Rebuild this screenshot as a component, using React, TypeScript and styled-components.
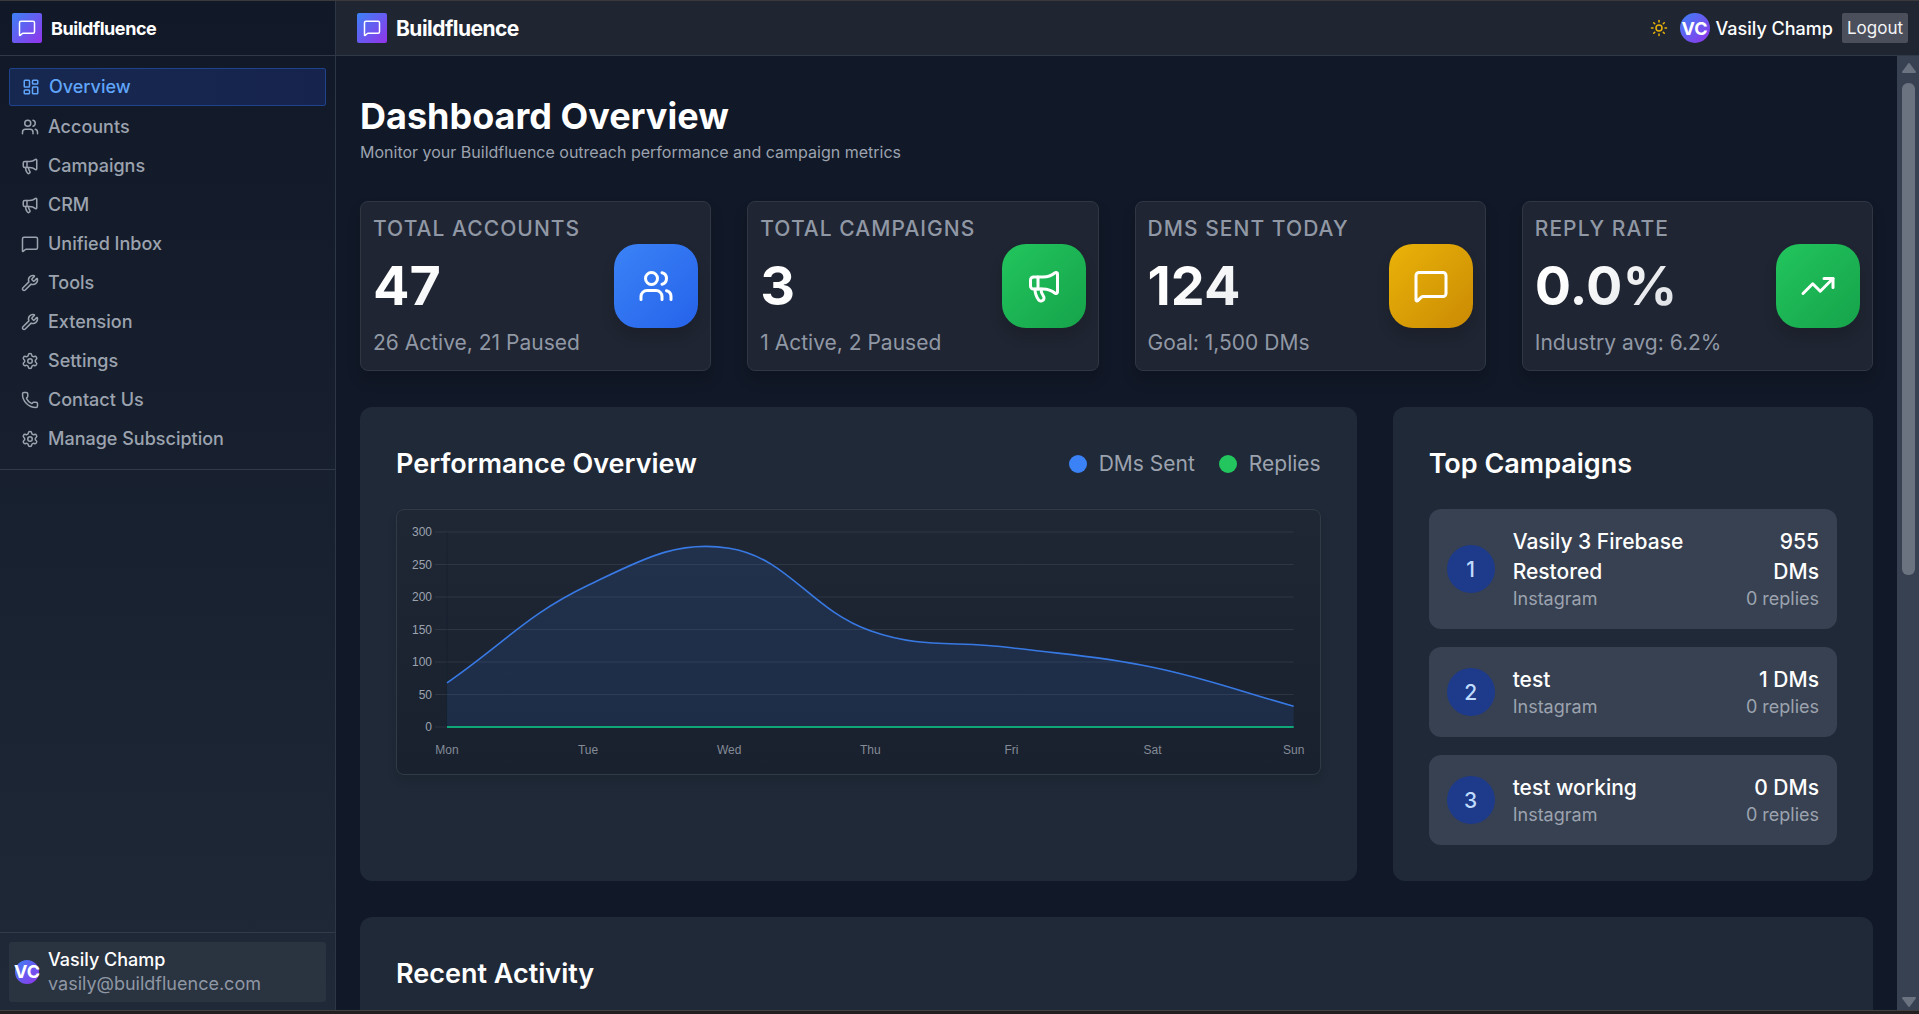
import React, { useLayoutEffect, useRef, useState } from "react";
import styled, { createGlobalStyle } from "styled-components";
import {
  LayoutDashboard,
  Users,
  Megaphone,
  MessageSquare,
  Wrench,
  Settings,
  Phone,
  Sun,
  TrendingUp,
  type LucideIcon,
} from "lucide-react";

const GlobalStyle = createGlobalStyle`
  *, *::before, *::after { box-sizing: border-box; }
  body { margin: 0; background: #111827; }
  h1, h2, p, ul, ol { margin: 0; padding: 0; }
  ul, ol { list-style: none; }
  button { font: inherit; border: 0; cursor: pointer; }
  a { color: inherit; text-decoration: none; }
`;

const Page = styled.div`
  display: flex;
  flex-direction: column;
  height: 100vh;
  overflow: hidden;
  border-top: 1px solid #3a3a3c;
  background: #111827;
  color: #fff;
  font-family: Inter, "Noto Sans", sans-serif;
  font-size: 18px;
  line-height: 27px;
`;

const Shell = styled.div`
  display: flex;
  flex: 1;
  min-height: 0;
`;

const WindowEdge = styled.div`
  height: 4px;
  flex: none;
  border-top: 1px solid #414141;
  background: #231f20;
`;

const Sidebar = styled.aside`
  display: flex;
  flex-direction: column;
  flex: none;
  width: 336px;
  border-right: 1px solid #2d3645;
  background: linear-gradient(180deg, #111827, #1f2937);
`;

const BrandBar = styled.div`
  display: flex;
  align-items: center;
  gap: 9px;
  height: 55px;
  flex: none;
  padding: 0 12px;
  border-bottom: 1px solid #303948;
`;

const LogoTile = styled.span`
  display: grid;
  place-items: center;
  width: 30px;
  height: 30px;
  border-radius: 2px;
  background: linear-gradient(135deg, #3b82f6, #9333ea);
`;

const BrandName = styled.span<{ $size: number }>`
  font-size: ${(p) => p.$size}px;
  font-weight: 700;
  letter-spacing: -0.025em;
`;

const NavList = styled.ul`
  display: flex;
  flex-direction: column;
  gap: 3px;
  padding: 12px 9px;
  border-bottom: 1px solid #303a49;
`;

const NavLink = styled.a<{ $active?: boolean }>`
  display: flex;
  align-items: center;
  gap: 9px;
  padding: 4px 12px 5px;
  border: ${(p) => (p.$active ? "1px solid #1e438c" : "0")};
  border-radius: 2px;
  background: ${(p) => (p.$active ? "linear-gradient(90deg, #172850, #16244d)" : "none")};
  color: ${(p) => (p.$active ? "#60a5fa" : "#9ca3af")};
  font-weight: 500;
`;

const Account = styled.div`
  margin-top: auto;
  padding: 9px 9px 8px;
  border-top: 1px solid #313b4a;
`;

const AccountCard = styled.div`
  display: flex;
  align-items: center;
  gap: 9px;
  padding: 6px;
  border-radius: 3px;
  background: #2a3340;
  line-height: 24px;
`;

const Avatar = styled.span<{ $size: number }>`
  display: flex;
  align-items: center;
  justify-content: center;
  flex: none;
  width: ${(p) => p.$size}px;
  height: ${(p) => p.$size}px;
  border-radius: 50%;
  background: linear-gradient(135deg, #3b82f6, #9333ea);
  font-weight: 700;
`;

const PersonName = styled.div`
  font-weight: 500;
`;

const Email = styled.div`
  color: #8f97a4;
`;

const Column = styled.div`
  display: flex;
  flex-direction: column;
  flex: 1;
  min-width: 0;
`;

const TopBar = styled.header`
  display: flex;
  align-items: center;
  justify-content: space-between;
  flex: none;
  height: 55px;
  padding: 0 11px 0 21px;
  border-bottom: 1px solid #303948;
  background: #1f2632;
`;

const BarGroup = styled.div<{ $gap: number }>`
  display: flex;
  align-items: center;
  gap: ${(p) => p.$gap}px;
`;

const ThemeButton = styled.button`
  display: grid;
  place-items: center;
  padding: 0;
  margin-right: 3px;
  background: none;
  color: #eab308;
`;

const LogoutButton = styled.button`
  height: 30px;
  padding: 0 5px;
  border-radius: 2px;
  background: #4b4f5b;
  color: #f3f4f6;
  font-size: 17px;
`;

const ScrollArea = styled.div`
  display: flex;
  flex: 1;
  min-height: 0;
`;

const Main = styled.main`
  flex: 1;
  min-width: 0;
  padding: 36px 24px;
  overflow-y: auto;
  scrollbar-width: none;
`;

const ScrollTrack = styled.div`
  display: flex;
  flex-direction: column;
  align-items: center;
  justify-content: space-between;
  flex: none;
  width: 22px;
  padding: 7px 0 3px 1px;
  background: #374151;
`;

const ScrollThumb = styled.div`
  width: 13px;
  flex: 0 1 492px;
  margin: 10px 0 auto;
  border-radius: 6px;
  background: #6b7280;
`;

const PageTitle = styled.h1`
  font-size: 36px;
  line-height: 48px;
  font-weight: 700;
`;

const PageLead = styled.p`
  margin-bottom: 36px;
  color: #9ca3af;
  font-size: 16px;
  line-height: 25px;
`;

const StatGrid = styled.section`
  display: grid;
  grid-template-columns: repeat(4, minmax(0, 1fr));
  gap: 36px;
`;

const StatCard = styled.article`
  display: flex;
  align-items: center;
  justify-content: space-between;
  padding: 12px;
  border: 1px solid #303743;
  border-radius: 8px;
  background: #1f2532;
  box-shadow: 0 9px 14px rgba(0, 0, 0, 0.16);
`;

const StatLabel = styled.div`
  color: #9198a5;
  font-size: 21px;
  line-height: 30px;
  font-weight: 500;
  letter-spacing: 0.05em;
  text-transform: uppercase;
`;

const StatValue = styled.div`
  margin: 12px 0;
  font-size: 54px;
  line-height: 60px;
  font-weight: 700;
  background: linear-gradient(135deg, #ffffff 20%, #d1d5db);
  -webkit-background-clip: text;
  background-clip: text;
  color: transparent;
`;

const StatNote = styled.div`
  color: #9198a5;
  font-size: 21px;
  line-height: 30px;
`;

const StatIcon = styled.span<{ $from: string; $to: string }>`
  display: grid;
  place-items: center;
  flex: none;
  width: 84px;
  height: 84px;
  border-radius: 24px;
  background: linear-gradient(135deg, ${(p) => p.$from}, ${(p) => p.$to});
  box-shadow: 0 9px 14px rgba(0, 0, 0, 0.14);
`;

const PanelGrid = styled.div`
  display: grid;
  grid-template-columns: repeat(3, minmax(0, 1fr));
  gap: 36px;
  margin: 36px 0;
`;

const Panel = styled.section<{ $span?: number }>`
  grid-column: span ${(p) => p.$span ?? 1};
  padding: 36px;
  border-radius: 12px;
  background: #1f2937;
`;

const PanelHead = styled.div`
  display: flex;
  align-items: center;
  justify-content: space-between;
  margin-bottom: 24px;
`;

const PanelTitle = styled.h2`
  font-size: 27px;
  line-height: 42px;
  font-weight: 600;
`;

const Legend = styled.ul`
  display: flex;
  gap: 24px;
  color: #9ca3af;
  font-size: 21px;
  line-height: 30px;
`;

const LegendItem = styled.li<{ $color: string }>`
  display: flex;
  align-items: center;
  gap: 12px;

  &::before {
    content: "";
    width: 18px;
    height: 18px;
    border-radius: 50%;
    background: ${(p) => p.$color};
  }
`;

const ChartFrame = styled.div`
  padding: 12px;
  border: 1px solid #303946;
  border-radius: 8px;
  background: linear-gradient(180deg, #1f2735, #19212e);
  box-shadow: 0 6px 10px rgba(0, 0, 0, 0.1);
`;

const ChartSvg = styled.svg`
  display: block;
  width: 100%;
  height: 240px;
  overflow: visible;
  font-family: "Liberation Sans", Arial, sans-serif;
  font-size: 12px;
`;

const CampaignList = styled.ol`
  display: flex;
  flex-direction: column;
  gap: 18px;
`;

const CampaignRow = styled.li`
  display: flex;
  align-items: center;
  justify-content: space-between;
  padding: 18px;
  border-radius: 12px;
  background: #374151;
`;

const CampaignMain = styled.div`
  display: flex;
  align-items: center;
  gap: 18px;
`;

const Rank = styled.span`
  display: grid;
  place-items: center;
  flex: none;
  width: 48px;
  height: 48px;
  border-radius: 50%;
  background: #1e3a8a;
  color: #bfdbfe;
  font-size: 21px;
  font-weight: 500;
`;

const CampaignText = styled.div<{ $right?: boolean }>`
  text-align: ${(p) => (p.$right ? "right" : "left")};
`;

const Strong = styled.div`
  font-size: 21px;
  line-height: 30px;
  font-weight: 500;
`;

const Muted = styled.div`
  color: #9ca3af;
  font-size: 18px;
  line-height: 24px;
`;

const navItems: { label: string; icon: LucideIcon }[] = [
  { label: "Overview", icon: LayoutDashboard },
  { label: "Accounts", icon: Users },
  { label: "Campaigns", icon: Megaphone },
  { label: "CRM", icon: Megaphone },
  { label: "Unified Inbox", icon: MessageSquare },
  { label: "Tools", icon: Wrench },
  { label: "Extension", icon: Wrench },
  { label: "Settings", icon: Settings },
  { label: "Contact Us", icon: Phone },
  { label: "Manage Subsciption", icon: Settings },
];

const stats: { label: string; value: string; note: string; icon: LucideIcon; from: string; to: string }[] = [
  { label: "Total Accounts", value: "47", note: "26 Active, 21 Paused", icon: Users, from: "#3b82f6", to: "#2563eb" },
  { label: "Total Campaigns", value: "3", note: "1 Active, 2 Paused", icon: Megaphone, from: "#22c55e", to: "#16a34a" },
  { label: "DMs Sent Today", value: "124", note: "Goal: 1,500 DMs", icon: MessageSquare, from: "#eab308", to: "#ca8a04" },
  { label: "Reply Rate", value: "0.0%", note: "Industry avg: 6.2%", icon: TrendingUp, from: "#22c55e", to: "#16a34a" },
];

const campaigns = [
  { name: "Vasily 3 Firebase Restored", dms: 955 },
  { name: "test", dms: 1 },
  { name: "test working", dms: 0 },
];

const days = ["Mon", "Tue", "Wed", "Thu", "Fri", "Sat", "Sun"];
const sent = [68, 218, 275, 148, 122, 92, 32];
const ticks = [0, 50, 100, 150, 200, 250, 300];

type Point = { x: number; y: number };

// Smooth line through every point; handle length is shared out by segment length.
function spline(points: Point[], tension: number) {
  const handles = points.map((p, i) => {
    const prev = points[Math.max(i - 1, 0)];
    const next = points[Math.min(i + 1, points.length - 1)];
    const before = Math.hypot(p.x - prev.x, p.y - prev.y);
    const after = Math.hypot(next.x - p.x, next.y - p.y);
    const a = (tension * before) / (before + after);
    const b = (tension * after) / (before + after);
    return {
      inX: p.x - a * (next.x - prev.x),
      inY: p.y - a * (next.y - prev.y),
      outX: p.x + b * (next.x - prev.x),
      outY: p.y + b * (next.y - prev.y),
    };
  });
  return points.reduce((d, p, i) => {
    if (i === 0) return `M${p.x},${p.y}`;
    const from = handles[i - 1];
    const to = handles[i];
    return `${d} C${from.outX},${from.outY} ${to.inX},${to.inY} ${p.x},${p.y}`;
  }, "");
}

function PerformanceChart() {
  const ref = useRef<SVGSVGElement>(null);
  const [width, setWidth] = useState(900);

  useLayoutEffect(() => {
    const el = ref.current;
    if (!el) return;
    const measure = () => setWidth(el.getBoundingClientRect().width);
    measure();
    const observer = new ResizeObserver(measure);
    observer.observe(el);
    return () => observer.disconnect();
  }, []);

  const left = 38;
  const right = width - 14;
  const top = 10;
  const bottom = 205;
  const x = (i: number) => left + ((right - left) * i) / (days.length - 1);
  const y = (v: number) => bottom - ((bottom - top) * v) / 300;
  const line = spline(sent.map((v, i) => ({ x: x(i), y: y(v) })), 0.4);

  return (
    <ChartSvg ref={ref} role="img" aria-label="DMs sent and replies by day">
      {ticks.map((t) => (
        <g key={t}>
          <line x1={left - 12} x2={right} y1={y(t)} y2={y(t)} stroke="#9ca3af" strokeOpacity={0.14} />
          <text x={left - 15} y={y(t) + 4} textAnchor="end" fill="#9ca3af">
            {t}
          </text>
        </g>
      ))}
      <line x1={left} x2={left} y1={top} y2={bottom + 1} stroke="#111827" strokeOpacity={0.4} />
      <path d={`${line} L${right},${bottom} L${left},${bottom} Z`} fill="#3b82f6" fillOpacity={0.12} />
      <path d={line} fill="none" stroke="#3b82f6" strokeOpacity={0.9} strokeWidth={1.6} />
      <line x1={left} x2={right} y1={bottom} y2={bottom} stroke="#10a778" strokeWidth={2} />
      {days.map((d, i) => (
        <text key={d} x={x(i)} y={bottom + 27} textAnchor="middle" fill="#848b97">
          {d}
        </text>
      ))}
    </ChartSvg>
  );
}

function Brand({ size }: { size: number }) {
  return (
    <>
      <LogoTile>
        <MessageSquare size={18} />
      </LogoTile>
      <BrandName $size={size}>Buildfluence</BrandName>
    </>
  );
}

export default function App() {
  return (
    <Page>
      <GlobalStyle />
      <Shell>
        <Sidebar>
          <BrandBar>
            <Brand size={18} />
          </BrandBar>
          <nav>
            <NavList>
              {navItems.map(({ label, icon: Icon }, i) => (
                <li key={label}>
                  <NavLink href="#" $active={i === 0} aria-current={i === 0 ? "page" : undefined}>
                    <Icon size={18} />
                    {label}
                  </NavLink>
                </li>
              ))}
            </NavList>
          </nav>
          <Account>
            <AccountCard>
              <Avatar $size={24}>VC</Avatar>
              <div>
                <PersonName>Vasily Champ</PersonName>
                <Email>vasily@buildfluence.com</Email>
              </div>
            </AccountCard>
          </Account>
        </Sidebar>
        <Column>
          <TopBar>
            <BarGroup $gap={9}>
              <Brand size={21} />
            </BarGroup>
            <BarGroup $gap={9}>
              <ThemeButton type="button" aria-label="Toggle theme">
                <Sun size={18} />
              </ThemeButton>
              <BarGroup $gap={6}>
                <Avatar $size={30}>VC</Avatar>
                <PersonName>Vasily Champ</PersonName>
              </BarGroup>
              <LogoutButton type="button">Logout</LogoutButton>
            </BarGroup>
          </TopBar>
          <ScrollArea>
            <Main>
              <PageTitle>Dashboard Overview</PageTitle>
              <PageLead>Monitor your Buildfluence outreach performance and campaign metrics</PageLead>
              <StatGrid>
                {stats.map(({ label, value, note, icon: Icon, from, to }) => (
                  <StatCard key={label}>
                    <div>
                      <StatLabel>{label}</StatLabel>
                      <StatValue>{value}</StatValue>
                      <StatNote>{note}</StatNote>
                    </div>
                    <StatIcon $from={from} $to={to}>
                      <Icon size={36} />
                    </StatIcon>
                  </StatCard>
                ))}
              </StatGrid>
              <PanelGrid>
                <Panel $span={2}>
                  <PanelHead>
                    <PanelTitle>Performance Overview</PanelTitle>
                    <Legend>
                      <LegendItem $color="#3b82f6">DMs Sent</LegendItem>
                      <LegendItem $color="#22c55e">Replies</LegendItem>
                    </Legend>
                  </PanelHead>
                  <ChartFrame>
                    <PerformanceChart />
                  </ChartFrame>
                </Panel>
                <Panel>
                  <PanelHead>
                    <PanelTitle>Top Campaigns</PanelTitle>
                  </PanelHead>
                  <CampaignList>
                    {campaigns.map((c, i) => (
                      <CampaignRow key={c.name}>
                        <CampaignMain>
                          <Rank>{i + 1}</Rank>
                          <CampaignText>
                            <Strong>{c.name}</Strong>
                            <Muted>Instagram</Muted>
                          </CampaignText>
                        </CampaignMain>
                        <CampaignText $right>
                          <Strong>{c.dms} DMs</Strong>
                          <Muted>0 replies</Muted>
                        </CampaignText>
                      </CampaignRow>
                    ))}
                  </CampaignList>
                </Panel>
                <Panel $span={3}>
                  <PanelHead>
                    <PanelTitle>Recent Activity</PanelTitle>
                  </PanelHead>
                </Panel>
              </PanelGrid>
            </Main>
            <ScrollTrack aria-hidden="true">
              <svg width="14" height="10" viewBox="0 0 14 10">
                <path d="M7 1 L13 9 H1 Z" fill="#6b7280" stroke="#6b7280" strokeWidth="2" strokeLinejoin="round" />
              </svg>
              <ScrollThumb />
              <svg width="14" height="10" viewBox="0 0 14 10">
                <path d="M7 9 L13 1 H1 Z" fill="#6b7280" stroke="#6b7280" strokeWidth="2" strokeLinejoin="round" />
              </svg>
            </ScrollTrack>
          </ScrollArea>
        </Column>
      </Shell>
      <WindowEdge />
    </Page>
  );
}
